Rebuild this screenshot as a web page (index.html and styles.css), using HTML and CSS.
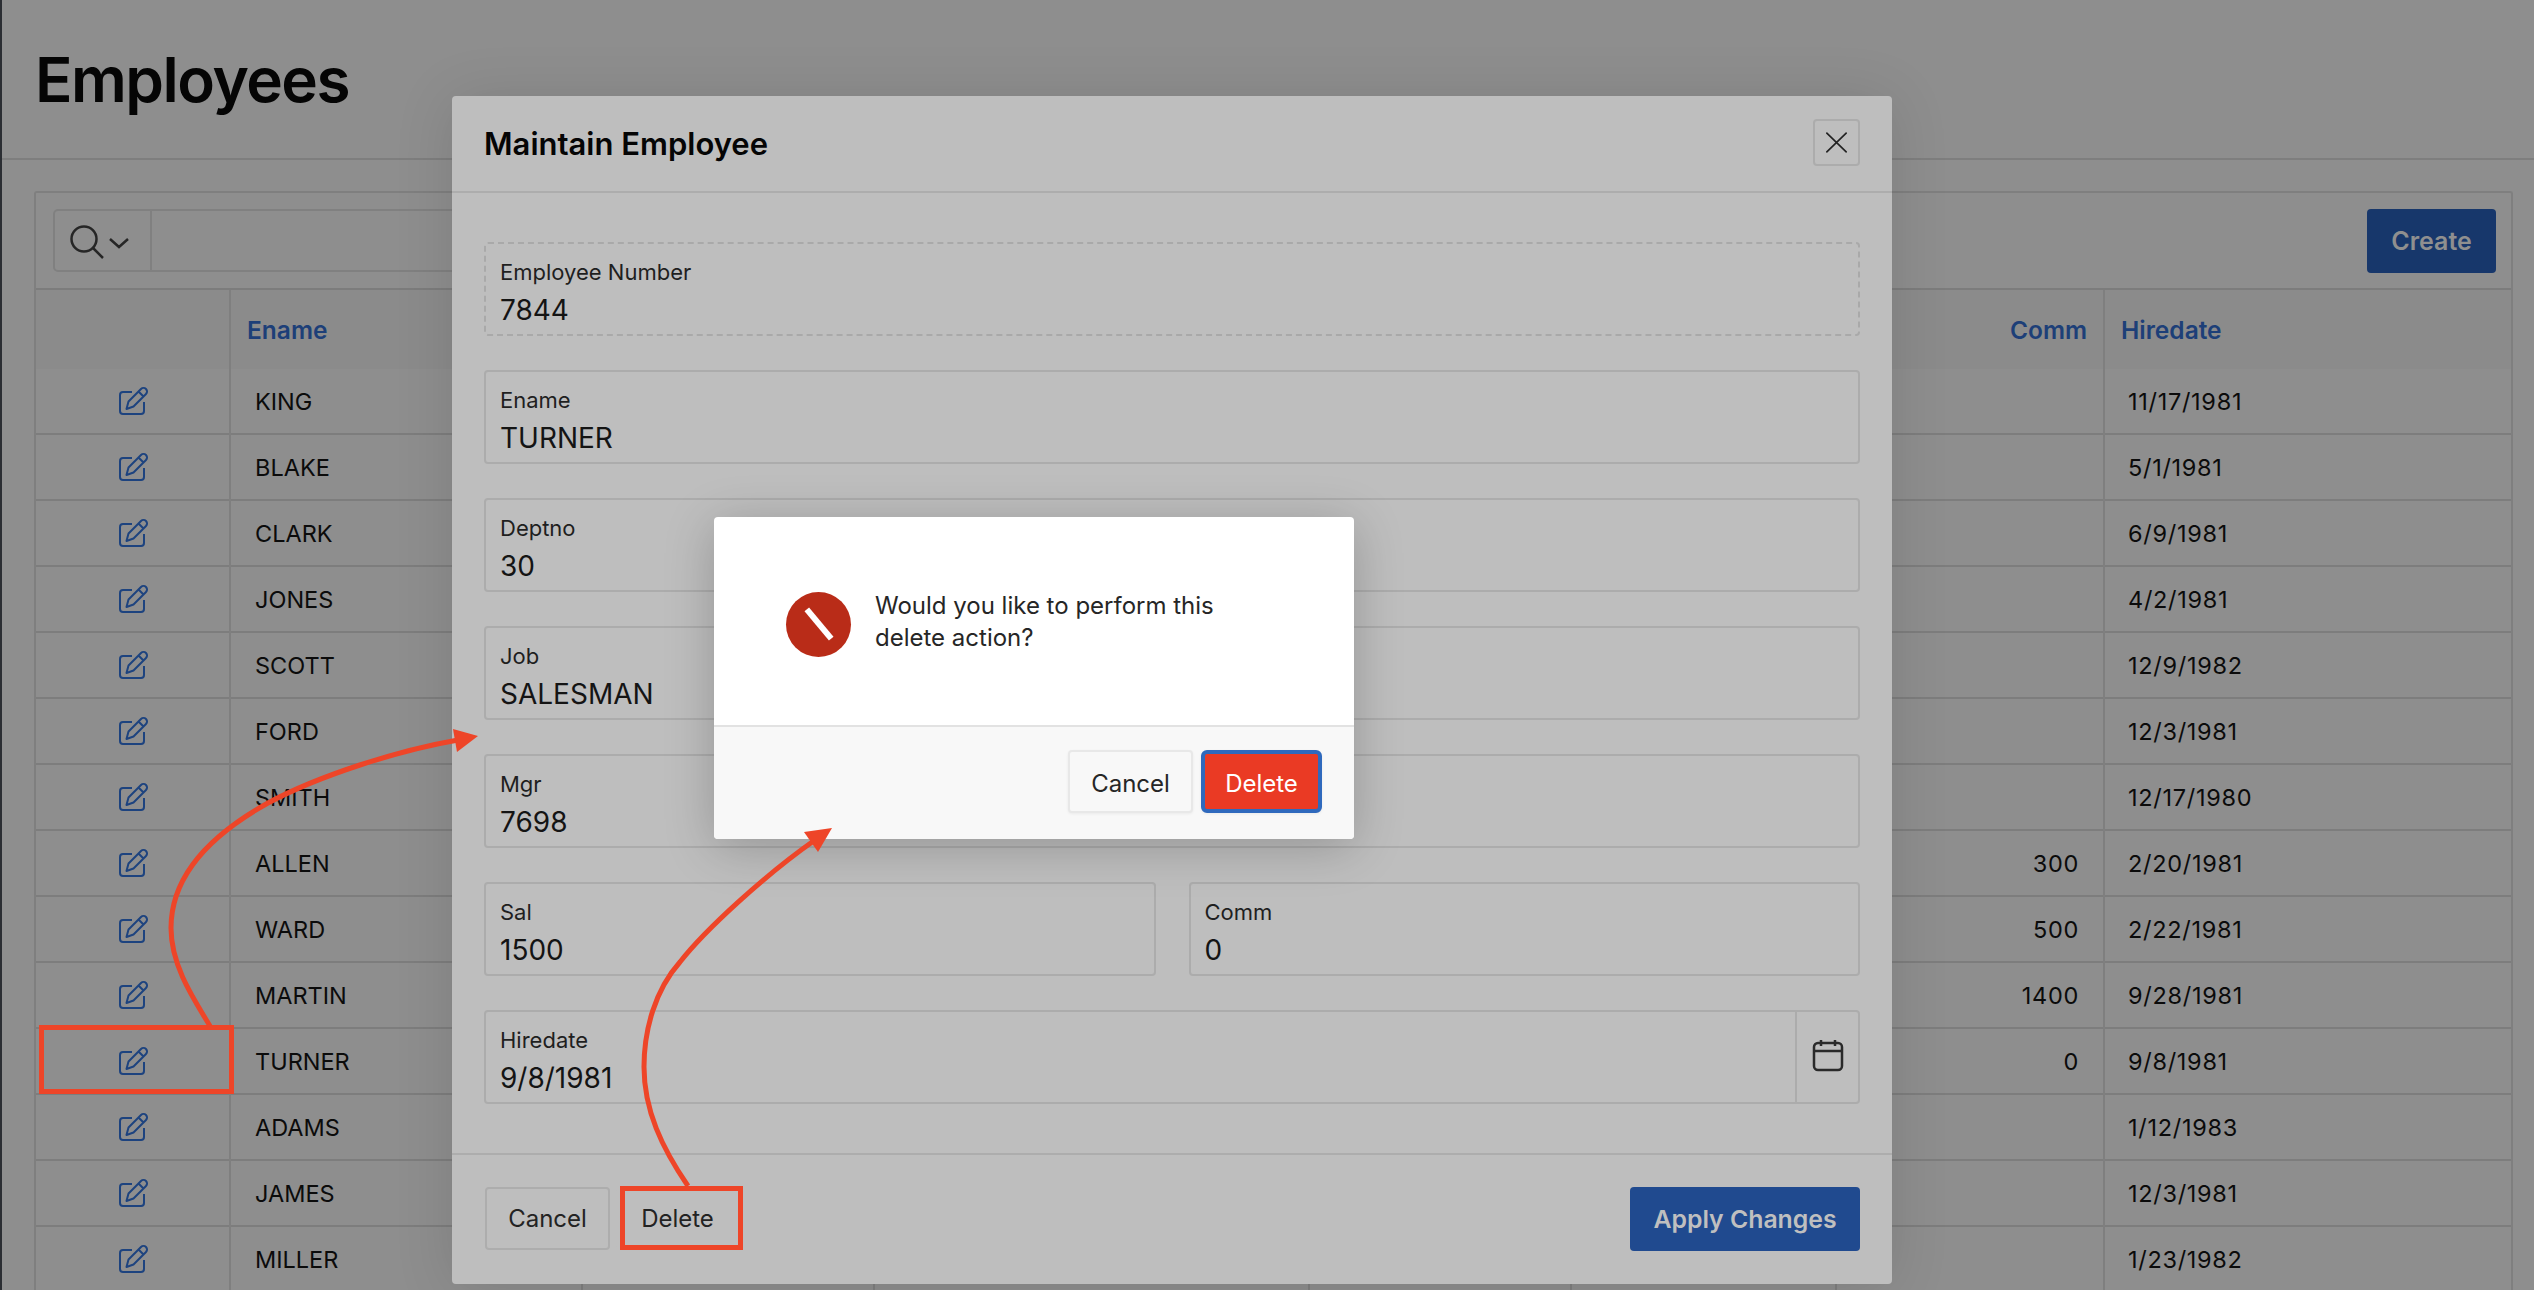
FILE: index.html
```html
<!DOCTYPE html>
<html lang="en">
<head>
<meta charset="utf-8">
<title>Employees</title>
<link rel="stylesheet" href="styles.css">
</head>
<body>
<svg class="defs" width="0" height="0" aria-hidden="true">
  <symbol id="edit" viewBox="0 0 32 32">
    <path d="M15 7H6a3 3 0 0 0-3 3v16a3 3 0 0 0 3 3h18a3 3 0 0 0 3-3V17" fill="none" stroke="currentColor" stroke-width="2"/>
    <path d="M9.500 24l2-7.500L24 4a3.500 3.500 0 0 1 5 5L16.500 21.500zM21.500 6.500l5 5" fill="none" stroke="currentColor" stroke-width="2" stroke-linejoin="round"/>
  </symbol>
</svg>
<div class="page">
  <header class="page-head"><h1>Employees</h1></header>
  <section class="card">
    <div class="toolbar">
      <div class="search">
        <div class="search-btn">
          <svg class="search-ico" viewBox="0 0 82 40"><circle cx="32" cy="18" r="12.500"/><path d="M41 27l10 10M58 18l9 8 9-8"/></svg>
        </div>
        <div class="search-input"></div>
      </div>
      <button class="btn-create">Create</button>
    </div>
    <div class="row head">
      <div></div><div class="th">Ename</div><div></div><div></div><div></div><div></div><div class="th num">Comm</div><div class="th">Hiredate</div>
    </div>
    <div class="row"><div class="ic"><svg class="edit"><use href="#edit"/></svg></div><div class="td">KING</div><div></div><div></div><div></div><div></div><div class="td num"></div><div class="td figs">11/17/1981</div></div>
    <div class="row"><div class="ic"><svg class="edit"><use href="#edit"/></svg></div><div class="td">BLAKE</div><div></div><div></div><div></div><div></div><div class="td num"></div><div class="td figs">5/1/1981</div></div>
    <div class="row"><div class="ic"><svg class="edit"><use href="#edit"/></svg></div><div class="td">CLARK</div><div></div><div></div><div></div><div></div><div class="td num"></div><div class="td figs">6/9/1981</div></div>
    <div class="row"><div class="ic"><svg class="edit"><use href="#edit"/></svg></div><div class="td">JONES</div><div></div><div></div><div></div><div></div><div class="td num"></div><div class="td figs">4/2/1981</div></div>
    <div class="row"><div class="ic"><svg class="edit"><use href="#edit"/></svg></div><div class="td">SCOTT</div><div></div><div></div><div></div><div></div><div class="td num"></div><div class="td figs">12/9/1982</div></div>
    <div class="row"><div class="ic"><svg class="edit"><use href="#edit"/></svg></div><div class="td">FORD</div><div></div><div></div><div></div><div></div><div class="td num"></div><div class="td figs">12/3/1981</div></div>
    <div class="row"><div class="ic"><svg class="edit"><use href="#edit"/></svg></div><div class="td">SMITH</div><div></div><div></div><div></div><div></div><div class="td num"></div><div class="td figs">12/17/1980</div></div>
    <div class="row"><div class="ic"><svg class="edit"><use href="#edit"/></svg></div><div class="td">ALLEN</div><div></div><div></div><div></div><div></div><div class="td num figs">300</div><div class="td figs">2/20/1981</div></div>
    <div class="row"><div class="ic"><svg class="edit"><use href="#edit"/></svg></div><div class="td">WARD</div><div></div><div></div><div></div><div></div><div class="td num figs">500</div><div class="td figs">2/22/1981</div></div>
    <div class="row"><div class="ic"><svg class="edit"><use href="#edit"/></svg></div><div class="td">MARTIN</div><div></div><div></div><div></div><div></div><div class="td num figs">1400</div><div class="td figs">9/28/1981</div></div>
    <div class="row"><div class="ic"><svg class="edit"><use href="#edit"/></svg></div><div class="td">TURNER</div><div></div><div></div><div></div><div></div><div class="td num figs">0</div><div class="td figs">9/8/1981</div></div>
    <div class="row"><div class="ic"><svg class="edit"><use href="#edit"/></svg></div><div class="td">ADAMS</div><div></div><div></div><div></div><div></div><div class="td num"></div><div class="td figs">1/12/1983</div></div>
    <div class="row"><div class="ic"><svg class="edit"><use href="#edit"/></svg></div><div class="td">JAMES</div><div></div><div></div><div></div><div></div><div class="td num"></div><div class="td figs">12/3/1981</div></div>
    <div class="row"><div class="ic"><svg class="edit"><use href="#edit"/></svg></div><div class="td">MILLER</div><div></div><div></div><div></div><div></div><div class="td num"></div><div class="td figs">1/23/1982</div></div>
  </section>
</div>

<div class="modal">
  <div class="modal-head">
    <h2>Maintain Employee</h2>
    <button class="close" aria-label="Close"><svg class="close-ico" viewBox="0 0 32 32"><path d="M0.500 1l31 30M31.500 1L0.500 31"/></svg></button>
  </div>
  <div class="modal-body">
    <div class="field wide readonly"><label>Employee Number</label><div class="val">7844</div></div>
    <div class="field wide"><label>Ename</label><div class="val">TURNER</div></div>
    <div class="field wide"><label>Deptno</label><div class="val">30</div></div>
    <div class="field wide"><label>Job</label><div class="val">SALESMAN</div></div>
    <div class="field wide"><label>Mgr</label><div class="val">7698</div></div>
    <div class="field"><label>Sal</label><div class="val">1500</div></div>
    <div class="field"><label>Comm</label><div class="val">0</div></div>
    <div class="field wide date">
      <div class="date-main"><label>Hiredate</label><div class="val">9/8/1981</div></div>
      <div class="date-btn"><svg class="cal" viewBox="0 0 32 34"><rect x="2" y="4" width="28" height="27" rx="4"/><path d="M2 12h28M9 1v6M23 1v6"/></svg></div>
    </div>
  </div>
  <div class="modal-foot">
    <button class="btn">Cancel</button>
    <button class="btn btn-plain">Delete</button>
    <button class="btn-apply">Apply Changes</button>
  </div>
</div>

<div class="dialog">
  <div class="dialog-body">
    <div class="stop"><span class="stop-bar"></span></div>
    <p>Would you like to perform this delete action?</p>
  </div>
  <div class="dialog-foot">
    <button class="dbtn">Cancel</button>
    <button class="dbtn danger">Delete</button>
  </div>
</div>

<svg class="notes" viewBox="0 0 2534 1290" aria-hidden="true">
  <rect class="box" x="41.500" y="1027.500" width="190" height="64"/>
  <rect class="box" x="622.500" y="1188.500" width="118" height="59"/>
  <path class="curve" d="M210 1026C193 998 171 965 171 928C171 880 205 838 268 803C320 775 400 750 458 740"/>
  <polygon class="head-tip" points="478,736 453,729 457,752"/>
  <path class="curve" d="M688 1186C662 1148 644 1110 644 1067C644 1030 655 990 680 962C705 930 765 875 815 840"/>
  <polygon class="head-tip" points="832,828 804,832 818,852"/>
</svg>
</body>
</html>
```
FILE: styles.css
```css
* { box-sizing: border-box; }
html, body { margin: 0; height: 1290px; overflow: hidden; }
body {
  position: relative;
  background: #8e8e8e;
  color: #0b0b0b;
  font-family: Inter, "Liberation Sans", sans-serif;
}
button { font-family: inherit; }
.defs { position: absolute; }

.page { height: 1290px; border-left: 2px solid #2b2e33; overflow: hidden; }
.page-head { height: 160px; border-bottom: 2px solid #7e7e7e; padding: 40px 0 0 33px; }
.page-head h1 { margin: 0; font-size: 62px; line-height: 80px; font-weight: 600; letter-spacing: -1.500px; color: #050505; }

.card { margin: 31px 21px 0 32px; border: 2px solid #7f7f7f; border-bottom: 0; border-radius: 3px 3px 0 0; }
.toolbar { height: 97px; padding: 16px 15px 0 17px; display: flex; justify-content: space-between; align-items: flex-start; border-bottom: 2px solid #7c7c7c; }
.search { display: flex; width: 800px; height: 63px; border: 2px solid #808080; border-radius: 5px; }
.search-btn { width: 97px; border-right: 2px solid #808080; display: flex; align-items: center; }
.search-ico { width: 82px; height: 40px; margin-left: -3px; fill: none; stroke: #262626; stroke-width: 2.500; }
.search-input { flex: 1; }
.btn-create { width: 129px; height: 64px; background: #17376b; color: #8f8f8f; border: 0; border-radius: 4px; font-size: 25px; font-weight: 600; }

.row { display: grid; grid-template-columns: 193px 352px 292px 435px 262px 265px 268px 1fr; height: 66px; border-bottom: 2px solid #7d7d7d; }
.row > div + div { border-left: 2px solid #7f7f7f; }
.row.head { height: 79px; background: #8b8b8b; border-bottom: 0; }
.th { padding: 0 16px; font-size: 24.500px; font-weight: 600; color: #1d3f78; line-height: 80px; }
.td { padding: 0 24px; font-size: 23.500px; line-height: 66px; color: #0b0b0b; }
.figs { letter-spacing: .7px; padding-left: 23px; }
.num { text-align: right; }
.ic { display: flex; align-items: center; justify-content: center; padding-bottom: 2px; }
.edit { width: 32px; height: 32px; color: #1d437f; }

.modal { position: absolute; left: 452px; top: 96px; width: 1440px; height: 1188px; display: flex; flex-direction: column; background: #bebebe; border-radius: 4px; box-shadow: 0 4px 60px rgba(0,0,0,.12); }
.modal-head { height: 97px; flex: none; display: flex; justify-content: space-between; align-items: center; padding: 0 32px 0 32px; border-bottom: 2px solid #adadad; }
.modal-head h2 { margin: 0; font-size: 31px; font-weight: 600; color: #050505; }
.close { width: 47px; height: 47px; margin-top: -2px; padding: 0; background: #bebebe; border: 2px solid #acacac; border-radius: 4px; display: flex; align-items: center; justify-content: center; }
.close-ico { width: 21px; height: 21px; fill: none; stroke: #222; stroke-width: 2.500; }
.modal-body { flex: 1; padding: 49px 32px 0 32px; display: grid; grid-template-columns: 1fr 1fr; grid-auto-rows: 94px; column-gap: 33px; row-gap: 34px; }
.field { border: 2px solid #acacac; border-radius: 4px; padding: 14px 14px 0; }
.field.wide { grid-column: 1 / -1; }
.field.readonly { border: 2px dashed #a9a9a9; }
.field label { display: block; font-size: 22px; line-height: 28px; color: #1f1f1f; }
.val { font-size: 28px; line-height: 36px; margin-top: 6px; color: #141414; }
.field.date { display: flex; padding: 0; }
.date-main { flex: 1; padding: 14px 14px 0; border-right: 2px solid #acacac; }
.date-btn { width: 61px; display: flex; align-items: center; justify-content: center; padding-bottom: 2px; }
.cal { width: 32px; height: 34px; fill: none; stroke: #2a2a2a; stroke-width: 2.500; }
.modal-foot { height: 131px; flex: none; display: flex; align-items: flex-start; gap: 6px; padding: 32px 32px 0 33px; border-top: 2px solid #adadad; }
.btn { width: 125px; height: 63px; background: #bebebe; border: 2px solid #adadad; border-radius: 4px; color: #232323; font-size: 24px; }
.btn-plain { width: 123px; border-color: transparent; }
.btn-apply { width: 230px; height: 64px; margin-left: auto; background: #204a8f; color: #bfbfbf; border: 0; border-radius: 4px; font-size: 24.800px; font-weight: 600; }

.dialog { position: absolute; left: 714px; top: 517px; width: 640px; height: 322px; background: #fff; border-radius: 4px; display: flex; flex-direction: column; box-shadow: 0 8px 50px rgba(0,0,0,.22); }
.dialog-body { height: 208px; flex: none; display: flex; align-items: center; gap: 24px; padding: 2px 120px 0 72px; }
.stop { width: 65px; height: 65px; flex: none; border-radius: 50%; background: #b92c18; display: flex; align-items: center; justify-content: center; margin-top: 4px; }
.stop-bar { width: 38px; height: 6px; background: #fff; transform: rotate(50deg); }
.dialog-body p { margin: 0; font-size: 24px; line-height: 32px; color: #262626; }
.dialog-foot { flex: 1; background: #f8f8f8; border-top: 2px solid #e2e2e2; border-radius: 0 0 4px 4px; display: flex; justify-content: flex-end; align-items: flex-start; gap: 8px; padding: 23px 32px 0; }
.dbtn { width: 125px; height: 63px; padding: 3px 0 0; background: #f8f8f8; border: 2px solid #e8e8e8; border-radius: 4px; color: #262626; font-size: 24px; box-shadow: 0 1px 3px rgba(0,0,0,.06); }
.dbtn.danger { width: 121px; background: #ea3a24; border: 4px solid #2f69bd; color: #fff; border-radius: 6px; }

.notes { position: absolute; left: 0; top: 0; width: 2534px; height: 1290px; pointer-events: none; }
.box { fill: none; stroke: #ee4528; stroke-width: 5; }
.curve { fill: none; stroke: #ee4528; stroke-width: 5; }
.head-tip { fill: #ee4528; }
```
